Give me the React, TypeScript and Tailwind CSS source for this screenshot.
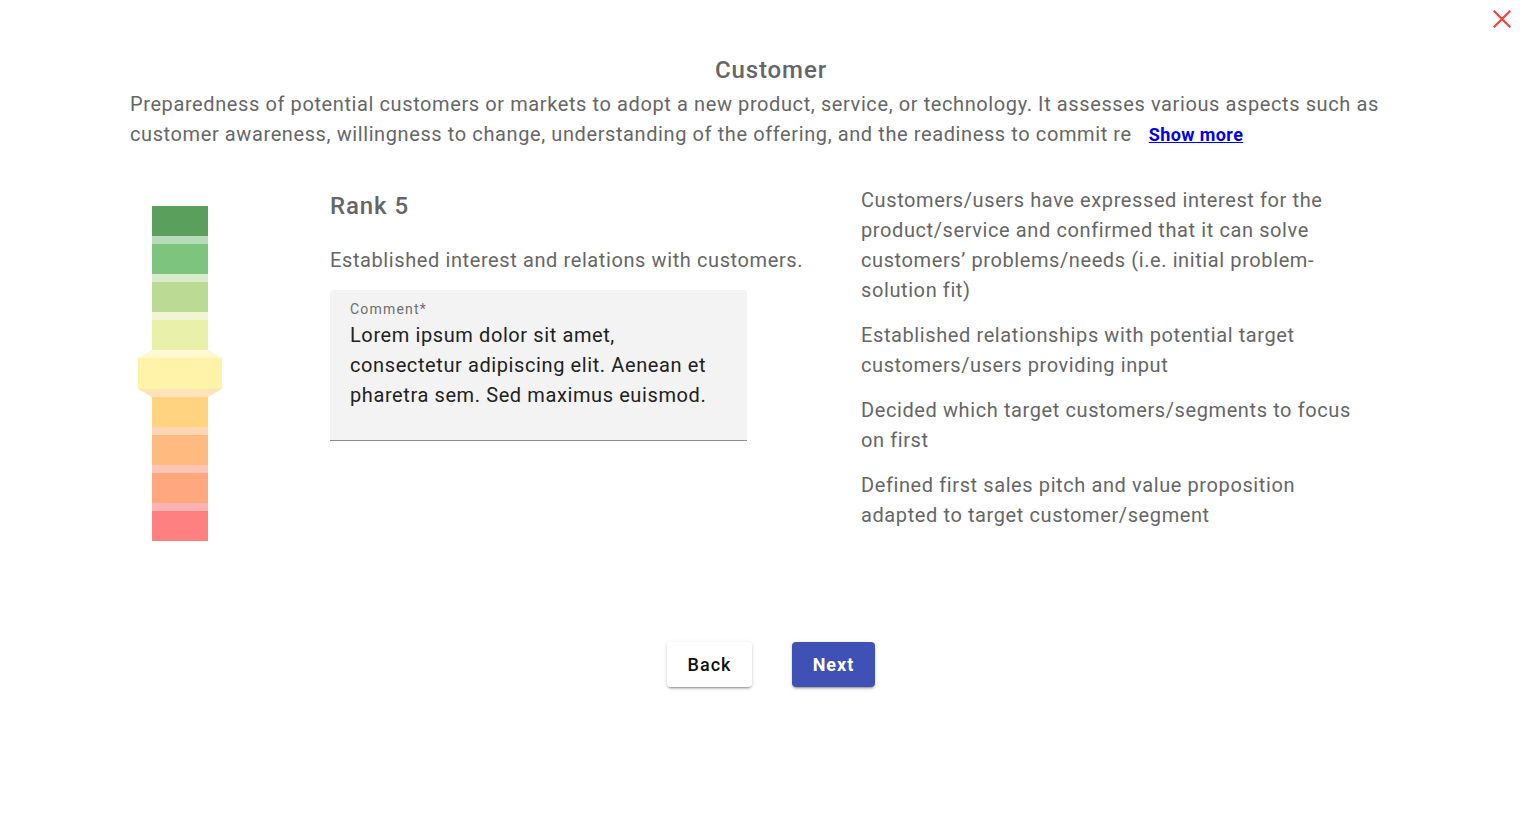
import React from "react";

const Ladder = () => (
  <svg width="84" height="335" viewBox="0 0 84 335">
    <rect x="14" y="0" width="56" height="30" fill="#5a9f5b" />
    <rect x="14" y="30" width="56" height="8" fill="#b7dcb7" />
    <rect x="14" y="38" width="56" height="30" fill="#7dc47f" />
    <rect x="14" y="68" width="56" height="8" fill="#d9ecc9" />
    <rect x="14" y="76" width="56" height="30" fill="#bbdb95" />
    <rect x="14" y="106" width="56" height="8" fill="#f2f5d3" />
    <rect x="14" y="114" width="56" height="30" fill="#e8f0a9" />
    <polygon points="14,144 70,144 84,152 0,152" fill="#fff7cf" />
    <rect x="0" y="152" width="84" height="31" fill="#fff3a9" />
    <polygon points="0,183 84,183 70,191 14,191" fill="#ffe2b7" />
    <rect x="14" y="191" width="56" height="30" fill="#ffd37f" />
    <rect x="14" y="221" width="56" height="8" fill="#ffd7b5" />
    <rect x="14" y="229" width="56" height="30" fill="#ffbb7f" />
    <rect x="14" y="259" width="56" height="8" fill="#ffc5b4" />
    <rect x="14" y="267" width="56" height="30" fill="#ffa77e" />
    <rect x="14" y="297" width="56" height="8" fill="#ffb1b3" />
    <rect x="14" y="305" width="56" height="30" fill="#ff8080" />
  </svg>
);

export default function App() {
  const font = { fontFamily: "Roboto, 'Noto Sans', sans-serif" };
  return (
    <div className="relative w-[1528px] h-[816px] bg-white text-[#666]" style={font}>
      <button className="absolute right-[17px] top-[10px] w-[18px] h-[18px] flex items-center justify-center">
        <svg width="18" height="18" viewBox="0 0 18 18">
          <path d="M1.5 1.5 L16.5 16.5 M16.5 1.5 L1.5 16.5" stroke="#f44336" strokeWidth="2.2" strokeLinecap="square" />
        </svg>
      </button>
      <div className="pl-[130px] pr-[116px] pt-[54px]">
        <h1 className="text-center text-[24px] leading-[32px] font-medium text-[#666] tracking-[0.9px]">Customer</h1>
        <p className="mt-[3px] text-[20px] leading-[30px] tracking-[0.6px] text-[#666]">
          Preparedness of potential customers or markets to adopt a new product, service, or technology. It assesses various aspects such as customer awareness, willingness to change, understanding of the offering, and the readiness to commit re
          <a href="#" className="ml-[17px] text-[18px] font-bold text-[#0000ee] underline tracking-[0.4px]">Show more</a>
        </p>
        <div className="mt-[35px] flex">
          <div className="w-[200px] shrink-0 pl-[8px] pt-[21px]">
            <Ladder />
          </div>
          <div className="w-[531px] shrink-0 pt-[5px]">
            <h2 className="text-[24px] leading-[32px] font-medium tracking-[0.9px]">Rank 5</h2>
            <p className="mt-[23px] text-[20px] leading-[30px] tracking-[0.6px]">Established interest and relations with customers.</p>
            <div className="mt-[15px] w-[417px] h-[151px] bg-[#f3f3f3] rounded-t-[4px] border-b border-[#8c8c8c] pl-[20px] pr-[28px] pt-[9px]">
              <div className="text-[14px] leading-[20px] tracking-[1.2px] text-[#6e6e6e]">Comment*</div>
              <div className="mt-[1px] text-[20px] leading-[30px] tracking-[0.6px] text-[#212121]">
                Lorem ipsum dolor sit amet, consectetur adipiscing elit. Aenean et pharetra sem. Sed maximus euismod.
              </div>
            </div>
          </div>
          <div className="w-[500px] shrink-0 text-[20px] leading-[30px] tracking-[0.6px] flex flex-col gap-[15px]">
            <p>Customers/users have expressed interest for the product/service and confirmed that it can solve customers’ problems/needs (i.e. initial problem-solution fit)</p>
            <p>Established relationships with potential target customers/users providing input</p>
            <p>Decided which target customers/segments to focus on first</p>
            <p>Defined first sales pitch and value proposition adapted to target customer/segment</p>
          </div>
        </div>
        <div className="mt-[101px] flex justify-center gap-[40px]">
          <button className="w-[85px] h-[45px] bg-white rounded-[4px] text-[18px] font-medium tracking-[1px] text-[#111] shadow-[0_3px_1px_-2px_rgba(0,0,0,0.2),0_2px_2px_0_rgba(0,0,0,0.14),0_1px_5px_0_rgba(0,0,0,0.12)]">Back</button>
          <button className="w-[83px] h-[45px] bg-[#3f51b5] rounded-[4px] text-[18px] font-bold tracking-[1px] text-white shadow-[0_3px_1px_-2px_rgba(0,0,0,0.2),0_2px_2px_0_rgba(0,0,0,0.14),0_1px_5px_0_rgba(0,0,0,0.12)]">Next</button>
        </div>
      </div>
    </div>
  );
}
